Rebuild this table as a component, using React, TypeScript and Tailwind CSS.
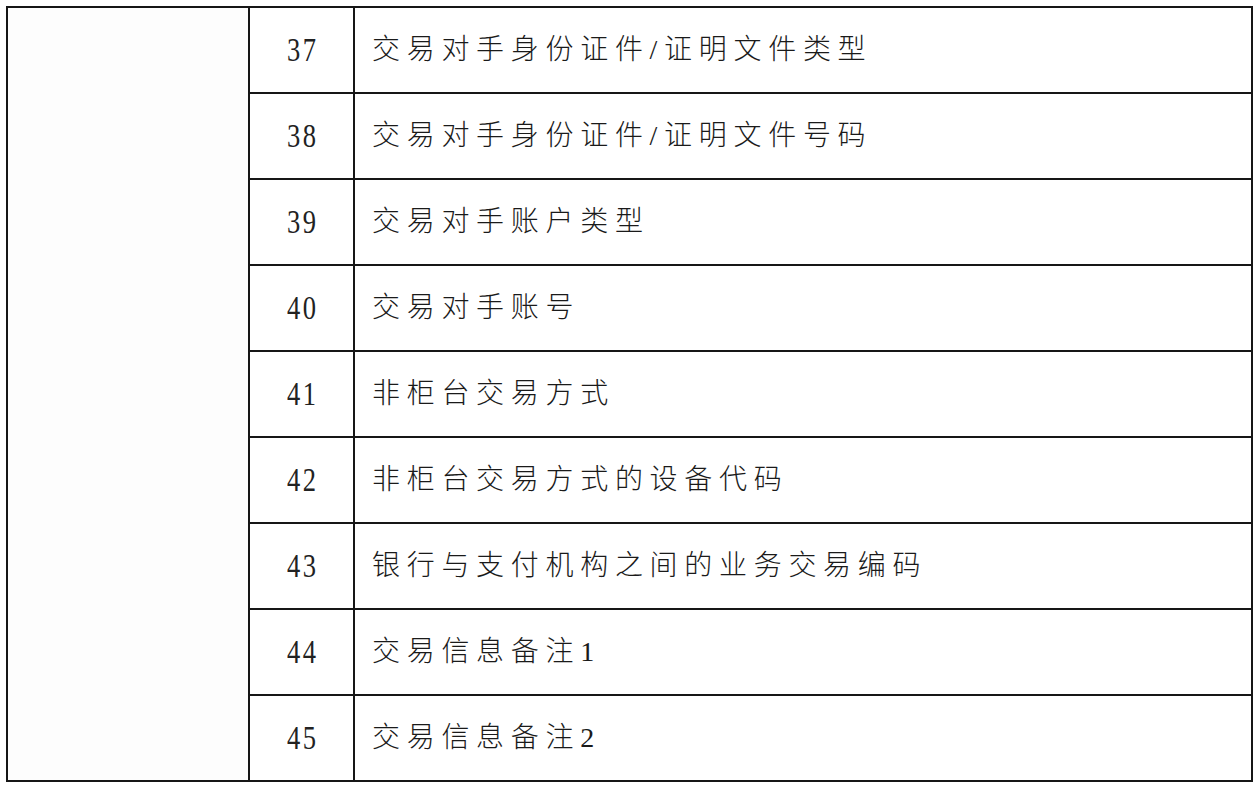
import React from 'react';

const rows: { no: string; label: string }[] = [
  { no: '37', label: '交易对手身份证件/证明文件类型' },
  { no: '38', label: '交易对手身份证件/证明文件号码' },
  { no: '39', label: '交易对手账户类型' },
  { no: '40', label: '交易对手账号' },
  { no: '41', label: '非柜台交易方式' },
  { no: '42', label: '非柜台交易方式的设备代码' },
  { no: '43', label: '银行与支付机构之间的业务交易编码' },
  { no: '44', label: '交易信息备注1' },
  { no: '45', label: '交易信息备注2' },
];

const App: React.FC = () => {
  return (
    <div className="w-[1260px] h-[790px] bg-white pt-[6px] pl-[6px] overflow-hidden">
      <div className="flex w-[1247px] h-[776px] border-2 border-[#161616]">
        {/* empty merged cell */}
        <div className="w-[242px] shrink-0 border-r-2 border-[#161616] bg-[#fdfdfd]" />

        <div className="flex flex-col flex-1">
          {rows.map((row, i) => (
            <div
              key={row.no}
              className={
                i === rows.length - 1
                  ? 'flex h-[84px]'
                  : 'flex h-[86px] border-b-2 border-[#161616]'
              }
            >
              <div className="w-[105px] shrink-0 border-r-2 border-[#161616] flex items-center justify-center">
                <span
                  className="inline-block scale-x-[0.78] text-[34px] leading-none text-[#222] tracking-[3px] pl-[3px]"
                  style={{ fontFamily: '"Liberation Serif", serif' }}
                >
                  {row.no}
                </span>
              </div>
              <div className="flex-1 flex items-center pl-[17px]">
                <span
                  className="text-[28px] font-light leading-none tracking-[6.7px] text-[#1a1a1a]"
                  style={{ fontFamily: '"Liberation Serif", "Noto Sans CJK SC", sans-serif' }}
                >
                  {row.label}
                </span>
              </div>
            </div>
          ))}
        </div>
      </div>
    </div>
  );
};

export default App;
